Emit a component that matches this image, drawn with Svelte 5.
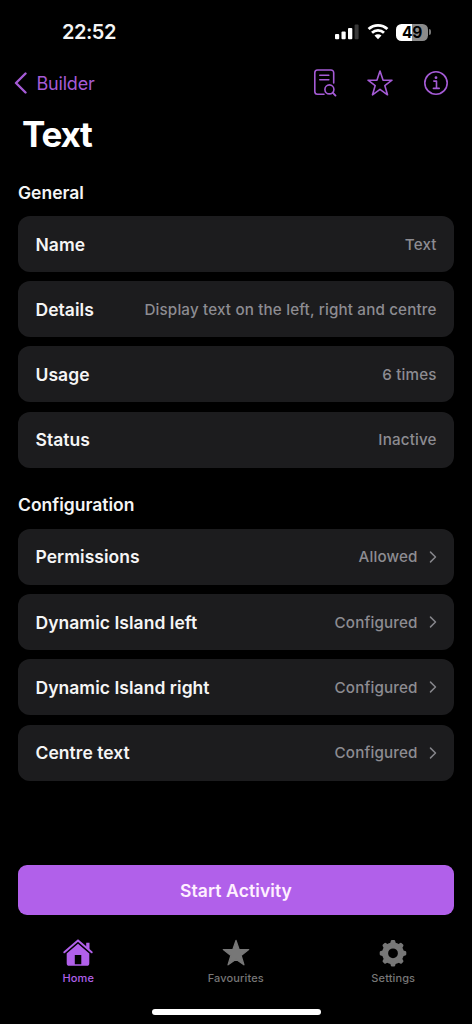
<script>
  const general = [
    ['Name', 'Text'],
    ['Details', 'Display text on the left, right and centre'],
    ['Usage', '6 times'],
    ['Status', 'Inactive']
  ];
  const configuration = [
    ['Permissions', 'Allowed'],
    ['Dynamic Island left', 'Configured'],
    ['Dynamic Island right', 'Configured'],
    ['Centre text', 'Configured']
  ];
  const teeth = [0, 45, 90, 135, 180, 225, 270, 315];
</script>

<div class="screen">
  <header class="status">
    <span class="time">22:52</span>
    <div class="signals">
      <svg class="bars" width="24" height="18" viewBox="0 0 24 18" fill="#fff">
        <rect x="0" y="11" width="4.2" height="5.2" rx="1" />
        <rect x="6.5" y="8.5" width="4.2" height="7.7" rx="1" />
        <rect x="13" y="5" width="4.3" height="11.2" rx="1" />
        <rect x="19.6" y="1.5" width="4" height="14.7" rx="1" fill="#383838" />
      </svg>
      <svg class="wifi" width="22" height="18" viewBox="0 0 22 18">
        <path d="M1.6 6.1a13.6 13.6 0 0 1 18.800 0M5 9.700a8.700 8.700 0 0 1 12 0" fill="none" stroke="#fff" stroke-width="2.800" />
        <path d="M7.500 12.600a5.100 5.100 0 0 1 7 0L11 16.200z" fill="#fff" />
      </svg>
      <div class="battery"><span>49</span></div>
      <i class="nub"></i>
    </div>
  </header>

  <nav class="navbar">
    <a class="back" href="#builder">
      <svg width="14" height="22" viewBox="0 0 14 22"><path d="M11.500 1.500 2 11l9.500 9.500" fill="none" stroke="currentColor" stroke-width="2.400" stroke-linecap="round" stroke-linejoin="round" /></svg>
      <span>Builder</span>
    </a>
    <div class="actions">
      <svg width="28" height="30" viewBox="0 0 28 30" fill="none" stroke="currentColor" stroke-width="1.600" stroke-linecap="round" stroke-linejoin="round">
        <path d="M13 26.300H6.500A2.700 2.700 0 0 1 3.800 23.600V4.700A2.700 2.700 0 0 1 6.500 2H20A2.700 2.700 0 0 1 22.700 4.700V15" />
        <path d="M8.800 7.200h9M8.800 11.800h9" />
        <circle cx="18.400" cy="21.400" r="4.500" />
        <path d="m21.700 24.700 2.800 2.900" stroke-width="1.900" />
      </svg>
      <svg width="28" height="30" viewBox="0 0 28 30" fill="none" stroke="currentColor" stroke-width="1.600" stroke-linejoin="round">
        <path d="M14 3 17 12.100 26 12.200 18.800 17.600 21.500 26.800 14 21.300 6.500 26.800 9.200 17.600 2 12.200 11 12.100Z" />
      </svg>
      <svg width="28" height="30" viewBox="0 0 28 30" fill="none" stroke="currentColor" stroke-width="1.600" stroke-linecap="round" stroke-linejoin="round">
        <circle cx="14" cy="15" r="11.200" />
        <path d="M11.800 13.100h2.700v7.200M11.400 20.400h5.800" />
        <circle cx="14" cy="9.700" r="1.400" fill="currentColor" stroke="none" />
      </svg>
    </div>
  </nav>

  <h1>Text</h1>

  <main>
    <section>
      <h2>General</h2>
      <div class="list">
        {#each general as [label, value]}
          <div class="row"><b>{label}</b><span class="value">{value}</span></div>
        {/each}
      </div>
    </section>
    <section class="config">
      <h2>Configuration</h2>
      <div class="list">
        {#each configuration as [label, value]}
          <div class="row">
            <b>{label}</b><span class="value">{value}</span>
            <svg class="chevron" width="8" height="12" viewBox="0 0 8 12"><path d="m1.500 1.100 5 4.900-5 4.900" fill="none" stroke="currentColor" stroke-width="1.500" stroke-linecap="round" stroke-linejoin="round" /></svg>
          </div>
        {/each}
      </div>
    </section>
  </main>

  <button>Start Activity</button>

  <footer>
    <a class="tab active" href="#home">
      <svg width="32" height="30" viewBox="0 0 32 30">
        <path d="M2.300 14.300 16 2.400l13.700 11.900" fill="none" stroke="currentColor" stroke-width="2" stroke-linecap="round" stroke-linejoin="round" />
        <path d="M24.200 4.800h3.300v7.100l-3.300-2.800z" fill="currentColor" />
        <path fill-rule="evenodd" d="M16 5.700 27.300 15.500V25.200a2.600 2.600 0 0 1-2.600 2.600H7.300a2.600 2.600 0 0 1-2.600-2.600V15.500ZM12.800 16.900V26.200h6.500V16.900Z" fill="currentColor" />
      </svg>
      <span>Home</span>
    </a>
    <a class="tab" href="#favourites">
      <svg width="32" height="30" viewBox="0 0 32 30"><path d="M16 2.400 19.100 11.400 28.700 11.600 21.100 17.400 23.900 26.800 16 21.300 8.100 26.800 10.900 17.400 3.300 11.600 12.900 11.400Z" fill="currentColor" stroke="currentColor" stroke-width="1.300" stroke-linejoin="round" /></svg>
      <span>Favourites</span>
    </a>
    <a class="tab" href="#settings">
      <svg width="32" height="30" viewBox="0 0 32 30">
        <circle cx="16" cy="15.300" r="7.900" fill="none" stroke="currentColor" stroke-width="6" />
        {#each teeth as angle}
          <path d="M12.900 6.500 13.800 3Q14 2 15 2H17Q18 2 18.200 3L19.100 6.500Z" fill="currentColor" transform="rotate({angle} 16 15.300)" />
        {/each}
      </svg>
      <span>Settings</span>
    </a>
  </footer>
  <div class="home-indicator"></div>
</div>

<style>
  :global(body) { margin: 0; background: #000; }
  .screen { box-sizing: border-box; width: 472px; height: 1024px; overflow: hidden; display: flex; flex-direction: column; background: #000; color: #f5f5f5; font-family: Inter, Roboto, sans-serif; }
  a { text-decoration: none; color: inherit; }
  svg { display: block; flex: none; }
  h1, h2 { margin: 0; }
  .status { height: 64px; box-sizing: border-box; display: flex; justify-content: space-between; align-items: center; padding: 0 41px 0 62px; flex: none; }
  .time { font-size: 20px; font-weight: 600; letter-spacing: -0.500px; }
  .signals { display: flex; align-items: center; }
  .wifi { margin: 0 7.500px 0 7.500px; }
  .battery { width: 32px; height: 17px; border-radius: 5.500px; background: linear-gradient(90deg, #fff 50%, #8b8b8b 50%); display: flex; align-items: center; justify-content: center; color: #000; font-size: 15.500px; font-weight: 700; line-height: 17px; letter-spacing: -0.300px; }
  .nub { width: 2px; height: 6px; margin-left: 1px; border-radius: 0 2px 2px 0; background: #777; }
  .navbar { height: 38px; display: flex; align-items: center; justify-content: space-between; padding: 0 22.500px 0 14px; color: #a55bd6; flex: none; }
  .back { display: flex; align-items: center; gap: 8.500px; font-size: 18px; letter-spacing: -0.200px; }
  .actions { display: flex; gap: 27.500px; }
  h1 { height: 65px; line-height: 65px; padding-left: 22px; margin-bottom: 1px; font-size: 35px; font-weight: 700; letter-spacing: -1.200px; flex: none; color: #fff; }
  main { padding: 0 18px; flex: none; }
  h2 { height: 48px; line-height: 50px; font-size: 17.500px; font-weight: 600; }
  .config h2 { line-height: 48px; }
  .list { display: grid; gap: 9.200px; }
  .row { height: 56px; box-sizing: border-box; padding: 0 17.500px; display: flex; align-items: center; background: #1c1c1e; border-radius: 12px; }
  b { font-size: 17.500px; font-weight: 600; letter-spacing: 0.040px; }
  .value { margin-left: auto; color: #8d8c92; font-size: 15.200px; font-weight: 500; letter-spacing: 0.160px; margin-right: -0.160px; white-space: nowrap; }
  .chevron { margin-left: 11px; color: #85858a; }
  .config { margin-top: 13.400px; }
  button { margin: 84.600px 18px 0; height: 50px; padding: 0; border: 0; border-radius: 9px; background: #b160ea; color: #fff0ff; font: 600 17.500px Inter, Roboto, sans-serif; letter-spacing: 0.100px; flex: none; }
  footer { display: grid; grid-template-columns: repeat(3, 157.500px); margin: 22px 0 0 -0.500px; height: 72px; flex: none; }
  .tab { display: flex; flex-direction: column; align-items: center; color: #777; font-size: 11px; font-weight: 500; letter-spacing: 0.120px; }
  .tab svg { margin-top: 1px; }
  .tab span { line-height: 16px; margin-top: 2px; }
  .active { color: #b160ea; }
  .home-indicator { width: 169px; height: 6px; border-radius: 3px; background: #fff; align-self: center; }
</style>
